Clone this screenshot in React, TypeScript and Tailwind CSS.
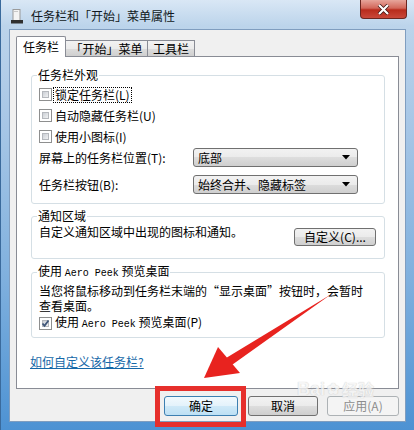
import { FC, ReactNode } from 'react'

const Checkbox: FC<{ checked?: boolean }> = ({ checked }) => (
  <span className="relative inline-block w-[13px] h-[13px] border border-[#8e8f8f] bg-white shrink-0">
    <span className="absolute inset-[2px] border border-[#b5b8bd] bg-[linear-gradient(135deg,#cbcfd5,#f0f1f2)]"></span>
    {checked && (
      <svg className="absolute inset-0" width="11" height="11" viewBox="0 0 11 11">
        <path d="M2.5 5.5 L4.5 7.8 L8.5 2.5" stroke="#3e5578" strokeWidth="1.8" fill="none" />
      </svg>
    )}
  </span>
)

const CheckRow: FC<{ children: ReactNode; checked?: boolean; focus?: boolean }> = ({ children, checked, focus }) => (
  <div className="flex items-center h-[21px]">
    <Checkbox checked={checked} />
    <span className={focus ? 'ml-[1px] px-[1px] border border-dotted border-black' : 'ml-[3px]'}>{children}</span>
  </div>
)

const Combo: FC<{ value: string }> = ({ value }) => (
  <div className="w-[165px] h-[19px] flex items-center justify-between pl-[4px] pr-[7px] border border-[#707070] rounded-[3px] bg-[linear-gradient(#f2f2f2,#ebebeb_50%,#dddddd_50%,#cfcfcf)]">
    <span>{value}</span>
    <svg width="8" height="5" viewBox="0 0 8 5">
      <path d="M0 0 H8 L4 4.5 Z" fill="#000" />
    </svg>
  </div>
)

const Group: FC<{ title: ReactNode; children: ReactNode; className?: string }> = ({ title, children, className }) => (
  <fieldset className={`border border-[#d5dfe5] rounded-[3px] px-[7px] ${className ?? ''}`}>
    <legend className="-ml-[2px] px-[1px] leading-[14px]">{title}</legend>
    {children}
  </fieldset>
)

const Mono: FC<{ children: ReactNode }> = ({ children }) => (
  <span className="font-['Liberation_Mono',monospace] text-[10px]">{children}</span>
)

const Btn: FC<{ children: ReactNode; w: string; variant?: 'default' | 'normal' | 'disabled' }> = ({ children, w, variant = 'normal' }) => {
  const cls =
    variant === 'default'
      ? 'border-[#3c7fb1] bg-[linear-gradient(#f2f9fd,#e3f2fb_50%,#cfe9f8_50%,#bde0f4)] text-black'
      : variant === 'disabled'
        ? 'border-[#adb2b5] bg-[#f4f4f4] text-[#8d8d8d]'
        : 'border-[#707070] bg-[linear-gradient(#f2f2f2,#ebebeb_50%,#dddddd_50%,#cfcfcf)] text-black'
  return <div className={`${w} h-[20px] flex items-center justify-center border rounded-[3px] ${cls}`}>{children}</div>
}

export default function App() {
  return (
    <div className="relative w-[414px] h-[430px] overflow-hidden font-['Noto_Sans_CJK_SC',sans-serif] text-[12px] leading-[14px] text-black">
      <div className="flex flex-col h-full pl-[8px] pr-[8px] pb-[8px] bg-[linear-gradient(180deg,#d9e7f5_0%,#bcd4eb_6%,#a6c6e6_30%,#7fb0de_65%,#4d92d3_100%)] border-l border-[#3a6a9c]">
        {/* title bar */}
        <div className="h-[29px] flex items-center pt-[3px] shrink-0 relative">
          <svg className="ml-[1px]" width="14" height="15" viewBox="0 0 14 15">
            <rect x="3" y="0.5" width="7" height="11" fill="#f4f4f4" stroke="#9a9a9a" />
            <rect x="1" y="11" width="12" height="3.5" fill="#2f2f2f" />
            <rect x="4" y="2" width="4" height="1" fill="#c9c9c9" />
          </svg>
          <span className="ml-[7px] text-[#101820]">任务栏和「开始」菜单属性</span>
          <div className="absolute right-[-1px] top-0 w-[47px] h-[19px] rounded-b-[4px] border border-t-0 border-[#6b2620] bg-[linear-gradient(#e7a59b,#d2675a_45%,#b82b1c_55%,#c9483a)] flex items-center justify-center">
            <svg width="13" height="11" viewBox="0 0 13 11">
              <path d="M2 1 L11 10 M11 1 L2 10" stroke="#3a1210" strokeWidth="3.6" />
              <path d="M2 1 L11 10 M11 1 L2 10" stroke="#ffffff" strokeWidth="2.2" />
            </svg>
          </div>
        </div>

        {/* client area */}
        <div className="flex-1 flex flex-col bg-[#f0f0f0] border border-[#7f9dbf] pt-[6px] px-[6px]">
          {/* tabs */}
          <div className="flex items-end h-[21px] -mb-px relative z-10">
            <div className="w-[50px] h-[21px] flex items-center justify-center bg-white border border-b-0 border-[#898c95] rounded-t-[2px]">
              任务栏
            </div>
            <div className="w-[82px] h-[17px] flex items-center justify-center border border-l-0 border-[#898c95] bg-[linear-gradient(#f2f2f2,#ebebeb_50%,#dddddd_50%,#cfcfcf)]">
              「开始」菜单
            </div>
            <div className="w-[47px] h-[17px] flex items-center justify-center border border-l-0 border-[#898c95] bg-[linear-gradient(#f2f2f2,#ebebeb_50%,#dddddd_50%,#cfcfcf)]">
              工具栏
            </div>
          </div>

          {/* panel */}
          <div className="h-[333px] bg-white border border-[#898c95] pt-[11px] pl-[14px] pr-[13px] flex flex-col">
            <Group title="任务栏外观" className="pb-[9px]">
              <div className="flex flex-col mt-[2px]">
                <CheckRow focus>锁定任务栏(L)</CheckRow>
                <CheckRow>自动隐藏任务栏(U)</CheckRow>
                <CheckRow>使用小图标(I)</CheckRow>
                <div className="flex items-center justify-between h-[19px] mt-[1px] pr-[19px]">
                  <span>屏幕上的任务栏位置(T):</span>
                  <Combo value="底部" />
                </div>
                <div className="flex items-center justify-between h-[19px] mt-[8px] pr-[19px]">
                  <span>任务栏按钮(B):</span>
                  <Combo value="始终合并、隐藏标签" />
                </div>
              </div>
            </Group>

            <Group title="通知区域" className="mt-[5px] pb-[12px]">
              <div className="flex items-start justify-between mt-[2px] pr-[1px]">
                <span>自定义通知区域中出现的图标和通知。</span>
                <Btn w="w-[82px] mt-[3px] !h-[18px]">
                  自定义(C)...
                </Btn>
              </div>
            </Group>

            <Group
              title={
                <>
                  使用 <Mono>Aero Peek</Mono> 预览桌面
                </>
              }
              className="mt-[5px] pb-[3px]"
            >
              <div className="flex flex-col mt-[2px]">
                <p className="leading-[15px] whitespace-nowrap">
                  当您将鼠标移动到任务栏末端的“显示桌面”按钮时，会暂时
                  <br />
                  查看桌面。
                </p>
                <CheckRow checked>
                  使用 <Mono>Aero Peek</Mono> 预览桌面(P)
                </CheckRow>
              </div>
            </Group>

            <span className="mt-[17px] -ml-[1px] text-[#1568a8] underline w-fit">如何自定义该任务栏?</span>
          </div>

          {/* buttons */}
          <div className="flex justify-end mt-[7px] gap-[10px]">
            <Btn w="w-[74px]" variant="default">
              确定
            </Btn>
            <Btn w="w-[70px]">取消</Btn>
            <Btn w="w-[72px] ml-[-1px]" variant="disabled">
              应用(A)
            </Btn>
          </div>
        </div>
      </div>

      {/* watermark */}
      <div className="absolute left-[297px] top-[380px] flex items-end gap-[2px] text-[18px] leading-[18px] font-bold font-['Liberation_Sans',sans-serif] text-[#f4f4f4] opacity-80 [text-shadow:0_0_1px_#b8b8b8] pointer-events-none">
        <span>Bai</span>
        <span className="text-[15px]">✿</span>
        <span className="font-['Noto_Sans_CJK_SC',sans-serif] text-[16px]">经验</span>
      </div>

      {/* red highlight box */}
      <div className="absolute left-[155px] top-[386px] w-[91px] h-[41px] border-[5px] border-[#e62f2c] pointer-events-none"></div>

      {/* red arrow */}
      <svg className="absolute inset-0 pointer-events-none" width="414" height="430" viewBox="0 0 414 430">
        <polygon points="333.6,292.4 332.4,293.6 226.5,357.7 231.5,365.3" fill="#e8231f" />
        <polygon points="204,378 218,347 240,373" fill="#e8231f" />
      </svg>
    </div>
  )
}
